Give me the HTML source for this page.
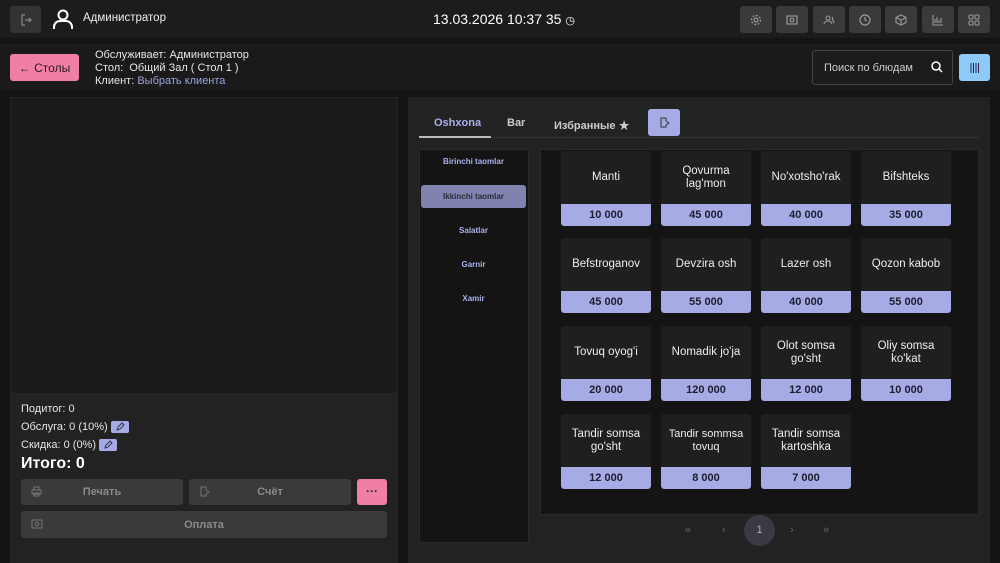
<!DOCTYPE html><html><head><meta charset="utf-8"><style>
*{box-sizing:border-box;margin:0;padding:0}
body{width:1000px;height:563px;overflow:hidden;background:#141414;font-family:"Liberation Sans","Noto Sans CJK SC",sans-serif;color:#e6e6e6;position:relative;font-size:12px}
.a{position:absolute}
.ib{position:absolute;top:6px;width:32px;height:27px;background:#3a3a3a;border-radius:3px;display:flex;align-items:center;justify-content:center}
.card{position:absolute;width:90px;height:75px;background:#1f1f1f;border-radius:3px;overflow:hidden}
.card .n{height:53px;display:flex;align-items:center;justify-content:center;text-align:center;font-size:11.5px;line-height:13px;color:#eee;padding:0 2px}
.card .p{height:22px;background:#a6abe6;color:#1d1d2e;font-weight:bold;font-size:11px;display:flex;align-items:center;justify-content:center;border-radius:0 0 3px 3px}
.cat{position:absolute;left:421px;width:105px;height:23px;font-size:8px;font-weight:bold;color:#aab0ee;display:flex;align-items:center;justify-content:center}
.btn{position:absolute;background:#3a3a3a;border-radius:3px;color:#8a8a8a;font-weight:bold;font-size:11px;display:flex;align-items:center;justify-content:center}
.pen{display:inline-block;width:18px;height:12px;background:#a6abe6;border-radius:2px;vertical-align:middle;position:relative}
</style></head><body>
<div class="a" style="left:0;top:0;width:1000px;height:38px;background:#1c1c1c"></div>
<div class="a" style="left:10px;top:6px;width:31px;height:27px;background:#333;border-radius:3px;display:flex;align-items:center;justify-content:center"><svg width="12" height="12" viewBox="0 0 12 12" fill="none" stroke="#888" stroke-width="1.2"><path d="M5 1H2v10h3M5 6h6M9 4l2 2-2 2"/></svg></div>
<svg class="a" style="left:51px;top:7px" width="24" height="24" viewBox="0 0 24 24" fill="none" stroke="#fff" stroke-width="2"><circle cx="12" cy="8" r="4.5"/><path d="M3 22v-2a6 6 0 0 1 6-6h6a6 6 0 0 1 6 6v2"/></svg>
<div class="a" style="left:83px;top:12px;font-size:11.5px;color:#eee">Администратор</div>
<div class="a" style="left:433px;top:11px;font-size:14px;color:#fff">13.03.2026 10:37 35 <span style="font-size:11px">◷</span></div>
<div class="ib" style="left:740px"><svg width="12" height="12" viewBox="0 0 12 12" fill="none" stroke="#999" stroke-width="1.2"><circle cx="6" cy="6" r="2"/><circle cx="6" cy="6" r="4.5" stroke-dasharray="2 1.5"/></svg></div>
<div class="ib" style="left:776px"><svg width="12" height="10" viewBox="0 0 12 10" fill="none" stroke="#999" stroke-width="1.2"><rect x="1" y="1" width="10" height="8"/><circle cx="6" cy="5" r="1.8"/></svg></div>
<div class="ib" style="left:813px"><svg width="13" height="10" viewBox="0 0 13 10" fill="none" stroke="#999" stroke-width="1.1"><circle cx="5" cy="3" r="2"/><path d="M1 9a4 3 0 0 1 8 0M9 2a2 2 0 0 1 0 3M11 8a3 3 0 0 0-2-3"/></svg></div>
<div class="ib" style="left:849px"><svg width="12" height="12" viewBox="0 0 12 12" fill="none" stroke="#999" stroke-width="1.2"><circle cx="6" cy="6" r="5"/><path d="M6 3v3l2 1"/></svg></div>
<div class="ib" style="left:885px"><svg width="12" height="12" viewBox="0 0 12 12" fill="none" stroke="#999" stroke-width="1.1"><path d="M6 1l5 2.5v5L6 11 1 8.5v-5zM1 3.5L6 6l5-2.5M6 6v5"/></svg></div>
<div class="ib" style="left:922px"><svg width="12" height="12" viewBox="0 0 12 12" fill="none" stroke="#999" stroke-width="1.1"><path d="M1 1v10h10M3 9V5M5 9V3M7 9V6M9 9V4"/></svg></div>
<div class="ib" style="left:958px"><svg width="12" height="12" viewBox="0 0 12 12" fill="none" stroke="#999" stroke-width="1.1"><rect x="1" y="1" width="4" height="4" rx="1"/><rect x="7" y="1" width="4" height="4" rx="1"/><rect x="1" y="7" width="4" height="4" rx="1"/><rect x="7" y="7" width="4" height="4" rx="1"/></svg></div>
<div class="a" style="left:0;top:44px;width:1000px;height:45px;background:#1a1a1a"></div>
<div class="a" style="left:10px;top:54px;width:69px;height:27px;background:#f07fa6;border-radius:3px;color:#2a1a20;font-size:12px;display:flex;align-items:center;justify-content:center">← Столы</div>
<div class="a" style="left:95px;top:49px;font-size:11px;line-height:13px;color:#e6e6e6">Обслуживает: Администратор<br>Стол:&nbsp; Общий Зал ( Стол 1 )<br>Клиент: <span style="color:#9aa4e0">Выбрать клиента</span></div>
<div class="a" style="left:812px;top:50px;width:141px;height:35px;border:1px solid #444;border-radius:3px;background:#1c1c1c;font-size:11px;color:#ccc;padding:11px 0 0 11px">Поиск по блюдам</div>
<svg class="a" style="left:931px;top:61px" width="12" height="12" viewBox="0 0 12 12" fill="none" stroke="#fff" stroke-width="1.5"><circle cx="5" cy="5" r="4"/><path d="M8 8l3 3"/></svg>
<div class="a" style="left:959px;top:54px;width:31px;height:27px;background:#8ec9f7;border-radius:3px;display:flex;align-items:center;justify-content:center"><svg width="10" height="12" viewBox="0 0 10 12" stroke="#224" stroke-width="1"><path d="M1 1v10M3.5 1v10M6 1v10M8.5 1v10"/></svg></div>
<div class="a" style="left:10px;top:97px;width:388px;height:297px;background:#1a1a1a;border:1px solid #262626"></div>
<div class="a" style="left:10px;top:394px;width:388px;height:169px;background:#222"></div>
<div class="a" style="left:21px;top:400px;font-size:11px;line-height:18px">Подитог: 0<br>Обслуга: 0 (10%) <span class="pen"><svg class="a" style="left:4px;top:1px" width="10" height="10" viewBox="0 0 10 10" fill="none" stroke="#334"><path d="M2 8l1-3 4-4 2 2-4 4z"/></svg></span><br>Скидка: 0 (0%) <span class="pen"><svg class="a" style="left:4px;top:1px" width="10" height="10" viewBox="0 0 10 10" fill="none" stroke="#334"><path d="M2 8l1-3 4-4 2 2-4 4z"/></svg></span></div>
<div class="a" style="left:21px;top:455px;font-size:16px;font-weight:bold;color:#fff">Итого: 0</div>
<div class="btn" style="left:21px;top:479px;width:162px;height:26px">Печать</div>
<div class="btn" style="left:189px;top:479px;width:162px;height:26px">Счёт</div>
<div class="a" style="left:357px;top:479px;width:30px;height:26px;background:#f07fa6;border-radius:3px;text-align:center;color:#333;font-weight:bold;line-height:24px">···</div>
<div class="btn" style="left:21px;top:511px;width:366px;height:27px">Оплата</div>
<svg class="a" style="left:31px;top:486px" width="11" height="11" viewBox="0 0 11 11" fill="none" stroke="#777"><rect x="1" y="4" width="9" height="4"/><rect x="3" y="1" width="5" height="3"/><rect x="3" y="7" width="5" height="3"/></svg>
<svg class="a" style="left:199px;top:486px" width="11" height="11" viewBox="0 0 11 11" fill="none" stroke="#777"><path d="M2 1h5v3l3 2-3 2v2H2z"/></svg>
<svg class="a" style="left:31px;top:519px" width="12" height="10" viewBox="0 0 12 10" fill="none" stroke="#777"><rect x="1" y="1" width="10" height="8"/><circle cx="6" cy="5" r="1.8"/></svg>
<div class="a" style="left:408px;top:97px;width:582px;height:466px;background:#222"></div>
<div class="a" style="left:419px;top:137px;width:560px;height:1px;background:#333"></div>
<div class="a" style="left:419px;top:136px;width:72px;height:2px;background:#bbb"></div>
<div class="a" style="left:434px;top:117px;font-size:11px;font-weight:bold;color:#aab0ee">Oshxona</div>
<div class="a" style="left:507px;top:117px;font-size:11px;font-weight:bold;color:#ccc">Bar</div>
<div class="a" style="left:554px;top:117px;font-size:11px;font-weight:bold;color:#ccc">Избранные ★</div>
<div class="a" style="left:648px;top:109px;width:32px;height:27px;background:#a6abe6;border-radius:3px;display:flex;align-items:center;justify-content:center"><svg width="11" height="11" viewBox="0 0 11 11" fill="none" stroke="#333"><path d="M2 1h5v3l3 2-3 2v2H2z"/></svg></div>
<div class="a" style="left:419px;top:149px;width:110px;height:394px;background:#141414;border:1px solid #2a2a2a"></div>
<div class="cat" style="top:150px">Birinchi taomlar</div>
<div class="cat" style="top:185px;background:#7f83ae;color:#2a2a3a;border-radius:3px">Ikkinchi taomlar</div>
<div class="cat" style="top:219px">Salatlar</div>
<div class="cat" style="top:253px">Garnir</div>
<div class="cat" style="top:287px">Xamir</div>
<div class="a" style="left:540px;top:149px;width:439px;height:366px;background:#141414;border:1px solid #2a2a2a"></div>
<div class="card" style="left:561px;top:151px"><div class="n">Manti</div><div class="p">10 000</div></div>
<div class="card" style="left:661px;top:151px"><div class="n">Qovurma lag'mon</div><div class="p">45 000</div></div>
<div class="card" style="left:761px;top:151px"><div class="n">No'xotsho'rak</div><div class="p">40 000</div></div>
<div class="card" style="left:861px;top:151px"><div class="n">Bifshteks</div><div class="p">35 000</div></div>
<div class="card" style="left:561px;top:238px"><div class="n">Befstroganov</div><div class="p">45 000</div></div>
<div class="card" style="left:661px;top:238px"><div class="n">Devzira osh</div><div class="p">55 000</div></div>
<div class="card" style="left:761px;top:238px"><div class="n">Lazer osh</div><div class="p">40 000</div></div>
<div class="card" style="left:861px;top:238px"><div class="n">Qozon kabob</div><div class="p">55 000</div></div>
<div class="card" style="left:561px;top:326px"><div class="n">Tovuq oyog'i</div><div class="p">20 000</div></div>
<div class="card" style="left:661px;top:326px"><div class="n">Nomadik jo'ja</div><div class="p">120 000</div></div>
<div class="card" style="left:761px;top:326px"><div class="n">Olot somsa go'sht</div><div class="p">12 000</div></div>
<div class="card" style="left:861px;top:326px"><div class="n">Oliy somsa ko'kat</div><div class="p">10 000</div></div>
<div class="card" style="left:561px;top:414px"><div class="n">Tandir somsa go'sht</div><div class="p">12 000</div></div>
<div class="card" style="left:661px;top:414px"><div class="n" style="font-size:11px">Tandir sommsa tovuq</div><div class="p">8 000</div></div>
<div class="card" style="left:761px;top:414px"><div class="n">Tandir somsa kartoshka</div><div class="p">7 000</div></div>
<div class="a" style="left:685px;top:524px;font-size:11px;color:#666">«</div>
<div class="a" style="left:722px;top:524px;font-size:11px;color:#666">‹</div>
<div class="a" style="left:744px;top:515px;width:31px;height:31px;border-radius:50%;background:#3a3a44;color:#aaa;font-size:11px;text-align:center;line-height:31px">1</div>
<div class="a" style="left:790px;top:524px;font-size:11px;color:#666">›</div>
<div class="a" style="left:823px;top:524px;font-size:11px;color:#666">»</div>
</body></html>
